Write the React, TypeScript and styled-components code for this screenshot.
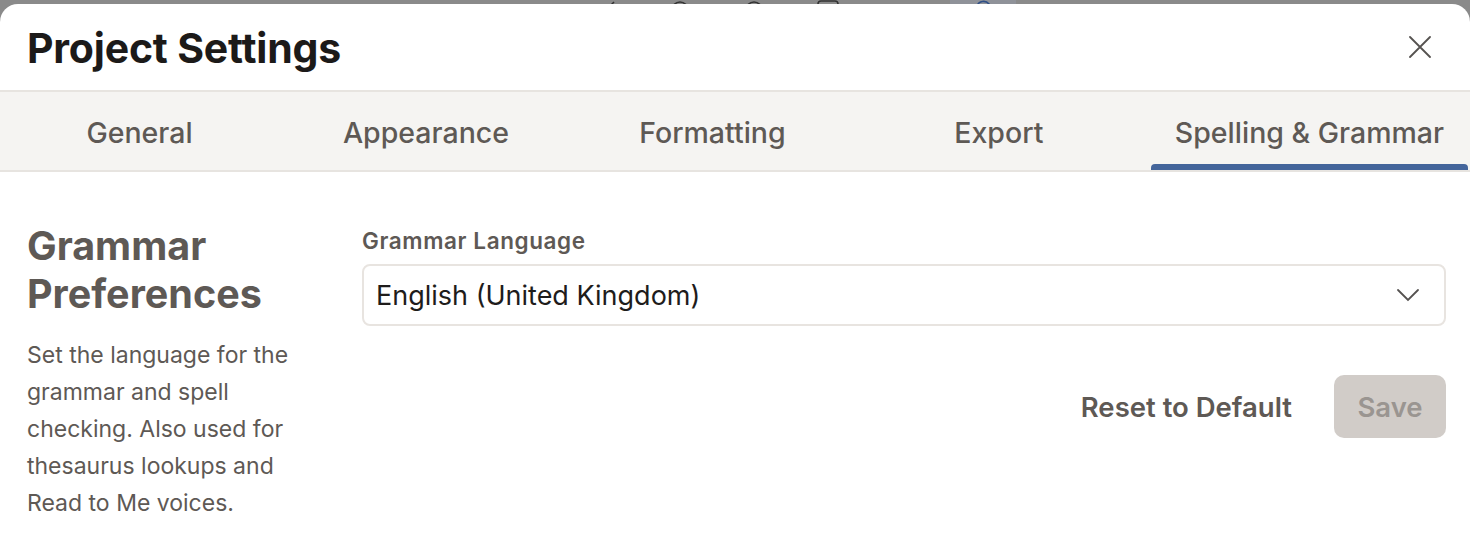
import React from "react";
import styled, { createGlobalStyle } from "styled-components";

const GlobalStyle = createGlobalStyle`
  html, body {
    margin: 0;
    padding: 0;
    background: #8a8a8a;
  }
  body {
    font-family: Inter, "Noto Sans", sans-serif;
  }
  * {
    box-sizing: border-box;
  }
`;

const tabs = ["General", "Appearance", "Formatting", "Export", "Spelling & Grammar"];

const App = () => {
  return (
    <>
      <GlobalStyle />
      <Backdrop>
        <Toolbar>
          <ToolIcon>
            <svg width="24" height="24" viewBox="0 0 24 24" fill="none" stroke="#333" strokeWidth="1.6">
              <path d="M4 20 L20 4" />
            </svg>
          </ToolIcon>
          <ToolIcon>
            <svg width="24" height="24" viewBox="0 0 24 24" fill="none" stroke="#333" strokeWidth="1.6">
              <circle cx="12" cy="12" r="8" />
            </svg>
          </ToolIcon>
          <ToolIcon>
            <svg width="24" height="24" viewBox="0 0 24 24" fill="none" stroke="#333" strokeWidth="1.6">
              <circle cx="12" cy="12" r="8" />
            </svg>
          </ToolIcon>
          <ToolIcon>
            <svg width="24" height="24" viewBox="0 0 24 24" fill="none" stroke="#333" strokeWidth="1.6">
              <rect x="2" y="3" width="20" height="18" rx="3" />
            </svg>
          </ToolIcon>
          <ToolIcon $active>
            <svg width="24" height="24" viewBox="0 0 24 24" fill="none" stroke="#2f4f86" strokeWidth="1.6">
              <path d="M6 8 A7 7 0 0 1 18 6 L20 9" />
            </svg>
          </ToolIcon>
        </Toolbar>

        <Dialog>
          <Header>
            <Title>Project Settings</Title>
            <CloseButton aria-label="Close">
              <svg width="22" height="22" viewBox="0 0 22 22" fill="none" stroke="#555250" strokeWidth="1.8" strokeLinecap="round">
                <path d="M1 1 L21 21 M21 1 L1 21" />
              </svg>
            </CloseButton>
          </Header>

          <TabBar>
            {tabs.map((t, i) => (
              <Tab key={t} $active={i === tabs.length - 1}>
                {t}
              </Tab>
            ))}
          </TabBar>

          <Body>
            <Aside>
              <SectionTitle>Grammar Preferences</SectionTitle>
              <SectionText>
                Set the language for the grammar and spell checking. Also used for thesaurus lookups and Read to
                Me voices.
              </SectionText>
            </Aside>

            <Main>
              <Field>
                <FieldLabel>Grammar Language</FieldLabel>
                <Select>
                  <span>English (United Kingdom)</span>
                  <svg width="24" height="16" viewBox="0 0 24 16" fill="none" stroke="#555250" strokeWidth="1.8" strokeLinecap="round">
                    <path d="M2 3 L12 13 L22 3" />
                  </svg>
                </Select>
              </Field>
              <Actions>
                <TextButton>Reset to Default</TextButton>
                <SaveButton disabled>Save</SaveButton>
              </Actions>
            </Main>
          </Body>
        </Dialog>
      </Backdrop>
    </>
  );
};

let Backdrop = styled.div`
  position: relative;
  height: 556px;
  overflow: hidden;
  background: #8a8a8a;
`;

let Toolbar = styled.div`
  display: flex;
  align-items: flex-start;
  gap: 50px;
  padding: 0 0 0 594px;
  height: 40px;
`;

let ToolIcon = styled.div<{ $active?: boolean }>`
  width: ${(p) => (p.$active ? "66px" : "24px")};
  height: 30px;
  margin-left: ${(p) => (p.$active ? "60px" : "0")};
  display: flex;
  justify-content: center;
  background: ${(p) => (p.$active ? "#8f9299" : "transparent")};
  svg {
    margin-top: -2px;
  }
`;

let Dialog = styled.div`
  position: absolute;
  top: 4px;
  left: 0;
  right: 0;
  bottom: 0;
  background: #ffffff;
  border-radius: 18px 18px 0 0;
  display: flex;
  flex-direction: column;
`;

let Header = styled.div`
  display: flex;
  justify-content: space-between;
  align-items: center;
  height: 88px;
  padding: 0 39px 0 27px;
  border-bottom: 2px solid #e7e4e0;
`;

let Title = styled.h1`
  margin: 2px 0 0;
  font-size: 41px;
  line-height: 50px;
  font-weight: 700;
  color: #1c1a19;
  letter-spacing: -0.2px;
`;

let CloseButton = styled.button`
  border: none;
  background: none;
  padding: 0;
  width: 22px;
  height: 22px;
  display: flex;
  cursor: pointer;
`;

let TabBar = styled.div`
  display: grid;
  grid-template-columns: repeat(4, 1fr) auto;
  column-gap: 7.5px;
  padding-right: 2px;
  height: 80px;
  background: #f5f4f2;
  border-bottom: 2px solid #e7e4e0;
`;

let Tab = styled.div<{ $active?: boolean }>`
  position: relative;
  display: flex;
  align-items: center;
  justify-content: center;
  padding: 2px 24px 0;
  margin-left: ${(p) => (p.$active ? "5px" : "0")};
  font-size: 28.5px;
  font-weight: 500;
  color: #5e5955;
  &::after {
    content: "";
    position: absolute;
    left: 0;
    right: 0;
    bottom: 0;
    height: 6px;
    border-radius: 4px 4px 0 0;
    background: ${(p) => (p.$active ? "#44659b" : "transparent")};
  }
`;

let Body = styled.div`
  display: grid;
  grid-template-columns: 285px 1fr;
  column-gap: 50px;
  padding: 50px 24px 0 27px;
`;

let Aside = styled.div`
  display: flex;
  flex-direction: column;
`;

let SectionTitle = styled.h2`
  margin: 0 0 19px;
  font-size: 39.5px;
  line-height: 48px;
  font-weight: 700;
  color: #5e5955;
`;

let SectionText = styled.p`
  margin: 0;
  font-size: 23px;
  line-height: 37px;
  color: #5e5955;
`;

let Main = styled.div`
  display: flex;
  flex-direction: column;
`;

let Field = styled.div`
  display: flex;
  flex-direction: column;
  gap: 10px;
  padding-top: 6px;
`;

let FieldLabel = styled.label`
  font-size: 22.5px;
  line-height: 26px;
  font-weight: 600;
  letter-spacing: 0.6px;
  color: #5e5955;
`;

let Select = styled.div`
  display: flex;
  align-items: center;
  justify-content: space-between;
  height: 62px;
  padding: 0 24px 0 12px;
  border: 2px solid #e8e4e0;
  border-radius: 8px;
  font-size: 27px;
  color: #1e1c1b;
`;

let Actions = styled.div`
  display: flex;
  justify-content: flex-end;
  align-items: center;
  gap: 42px;
  margin-top: 49px;
`;

let TextButton = styled.button`
  border: none;
  background: none;
  padding: 0;
  font-family: inherit;
  font-size: 27.5px;
  font-weight: 600;
  color: #5e5955;
  cursor: pointer;
`;

let SaveButton = styled.button`
  width: 112px;
  height: 63px;
  border: none;
  border-radius: 10px;
  background: #d1ccc8;
  font-family: inherit;
  font-size: 27.5px;
  font-weight: 600;
  color: #9a9591;
`;

export default App;
